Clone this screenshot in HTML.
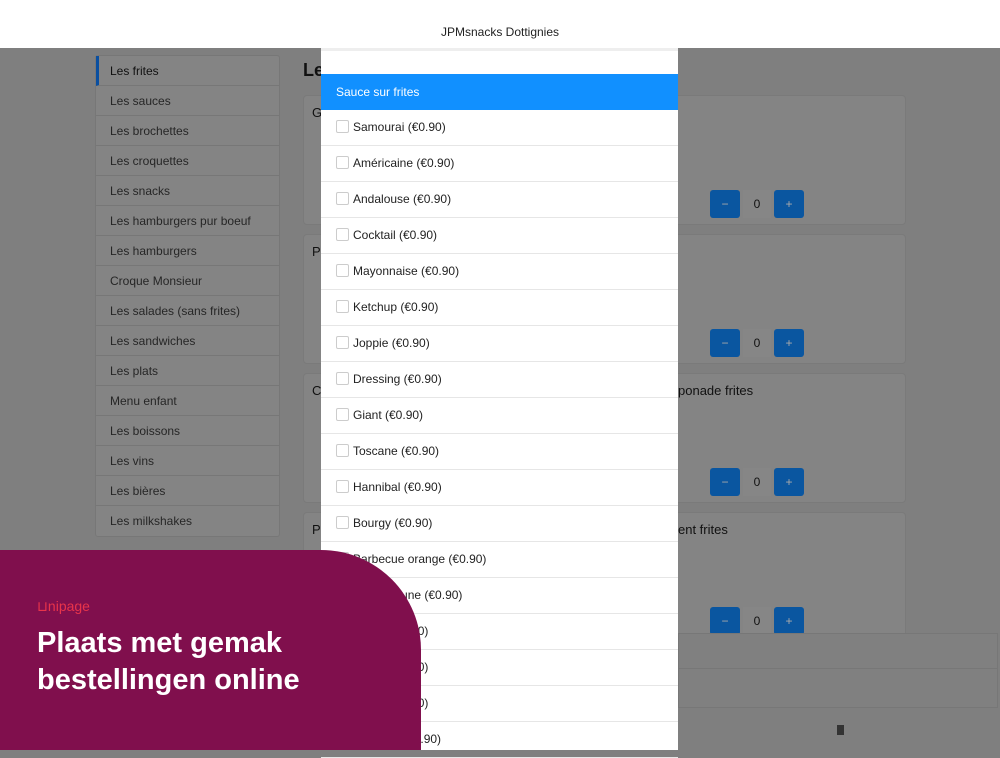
<!DOCTYPE html>
<html><head><meta charset="utf-8"><style>
*{box-sizing:border-box;margin:0;padding:0}
body{width:1000px;height:750px;overflow:hidden;background:#7f7f7f;font-family:"Liberation Sans",sans-serif;position:relative}
.hdr{position:absolute;left:0;top:0;width:1000px;height:48px;background:#fff;text-align:center;font-size:12px;color:#222;line-height:64px}
.side{position:absolute;left:95px;top:55px;width:185px;border:1px solid #777;background:#848484;border-radius:3px}
.side div{height:30px;border-bottom:1px solid #777;font-size:12px;color:#262626;padding-left:14px;line-height:30px}
.side div:first-child{border-left:3px solid #0a4fa0;padding-left:11px;color:#111}
.side div:last-child{border-bottom:none}
h2{position:absolute;left:303px;top:60px;font-size:18px;color:#111}
.card{position:absolute;left:303px;width:603px;height:130px;background:#848484;border:1px solid #7a7a7a;border-radius:4px}
.btn{position:absolute;width:30px;height:28px;background:#0a56a0;border-radius:3px;color:#aaa;font-size:12px;text-align:center;line-height:28px}
.num{position:absolute;width:28px;height:28px;background:#868686;color:#111;font-size:12px;text-align:center;line-height:28px}
.gt{position:absolute;font-size:13px;color:#111}
.modal{position:absolute;left:321px;top:48px;width:357px;height:702px;background:#fff;border-top:3px solid #eee}
.mh{position:absolute;left:0;top:23px;width:357px;height:36px;background:#1190ff;color:#fff;font-size:12px;padding-left:15px;line-height:36px}
.row{position:absolute;left:0;width:357px;height:36px;border-bottom:1px solid #e6e6e6;font-size:12px;color:#222;line-height:34px;padding-left:32px}
.row:before{content:"";position:absolute;left:15px;top:10px;width:11px;height:11px;border:1px solid #ccc;border-radius:2px}
.purp{position:absolute;left:0;top:550px;width:421px;height:200px;background:#800f4d;border-top-right-radius:100px}
.logo{position:absolute;left:37px;top:598px;color:#e8344a;font-size:14px}
.big{position:absolute;left:37px;top:625px;color:#fff;font-size:29px;font-weight:bold;line-height:37px}
.box{position:absolute;left:678px;width:320px;border:1px solid #777;background:#808080}
</style></head><body>
<div class="hdr">JPMsnacks Dottignies</div>
<div class="side"><div>Les frites</div><div>Les sauces</div><div>Les brochettes</div><div>Les croquettes</div><div>Les snacks</div><div>Les hamburgers pur boeuf</div><div>Les hamburgers</div><div>Croque Monsieur</div><div>Les salades (sans frites)</div><div>Les sandwiches</div><div>Les plats</div><div>Menu enfant</div><div>Les boissons</div><div>Les vins</div><div>Les bières</div><div>Les milkshakes</div></div>
<h2>Le</h2>
<div class="card" style="top:95px"></div><div class="card" style="top:234px"></div><div class="card" style="top:373px"></div><div class="card" style="top:512px"></div>
<div class="gt" style="left:312px;top:105px">G</div><div class="gt" style="left:312px;top:244px">P</div><div class="gt" style="left:312px;top:383px">C</div><div class="gt" style="left:312px;top:522px">P</div>
<div class="gt" style="left:678px;top:383px">ponade frites</div><div class="gt" style="left:678px;top:522px">ent frites</div>
<div class="btn" style="left:710px;top:190px">−</div><div class="num" style="left:743px;top:190px">0</div><div class="btn" style="left:774px;top:190px">+</div>
<div class="btn" style="left:710px;top:329px">−</div><div class="num" style="left:743px;top:329px">0</div><div class="btn" style="left:774px;top:329px">+</div>
<div class="btn" style="left:710px;top:468px">−</div><div class="num" style="left:743px;top:468px">0</div><div class="btn" style="left:774px;top:468px">+</div>
<div class="btn" style="left:710px;top:607px">−</div><div class="num" style="left:743px;top:607px">0</div><div class="btn" style="left:774px;top:607px">+</div>
<div class="box" style="top:633px;height:36px"></div><div class="box" style="top:668px;height:40px"></div>
<div style="position:absolute;left:837px;top:725px;width:7px;height:10px;background:#333"></div>
<div class="modal">
<div class="mh">Sauce sur frites</div>
<div class="row" style="top:59px">Samourai (€0.90)</div>
<div class="row" style="top:95px">Américaine (€0.90)</div>
<div class="row" style="top:131px">Andalouse (€0.90)</div>
<div class="row" style="top:167px">Cocktail (€0.90)</div>
<div class="row" style="top:203px">Mayonnaise (€0.90)</div>
<div class="row" style="top:239px">Ketchup (€0.90)</div>
<div class="row" style="top:275px">Joppie (€0.90)</div>
<div class="row" style="top:311px">Dressing (€0.90)</div>
<div class="row" style="top:347px">Giant (€0.90)</div>
<div class="row" style="top:383px">Toscane (€0.90)</div>
<div class="row" style="top:419px">Hannibal (€0.90)</div>
<div class="row" style="top:455px">Bourgy (€0.90)</div>
<div class="row" style="top:491px">Barbecue orange (€0.90)</div>
<div class="row" style="top:527px">Sauce brune (€0.90)</div>
<div class="row" style="top:563px">Sauce (€0.90)</div>
<div class="row" style="top:599px">Sauce (€0.90)</div>
<div class="row" style="top:635px">Sauce (€0.90)</div>
<div class="row" style="top:671px">Sauce fy (€0.90)</div>
</div>
<div class="purp"></div>
<div class="logo">⊔nipage</div>
<div class="big">Plaats met gemak<br>bestellingen online</div>
</body></html>
